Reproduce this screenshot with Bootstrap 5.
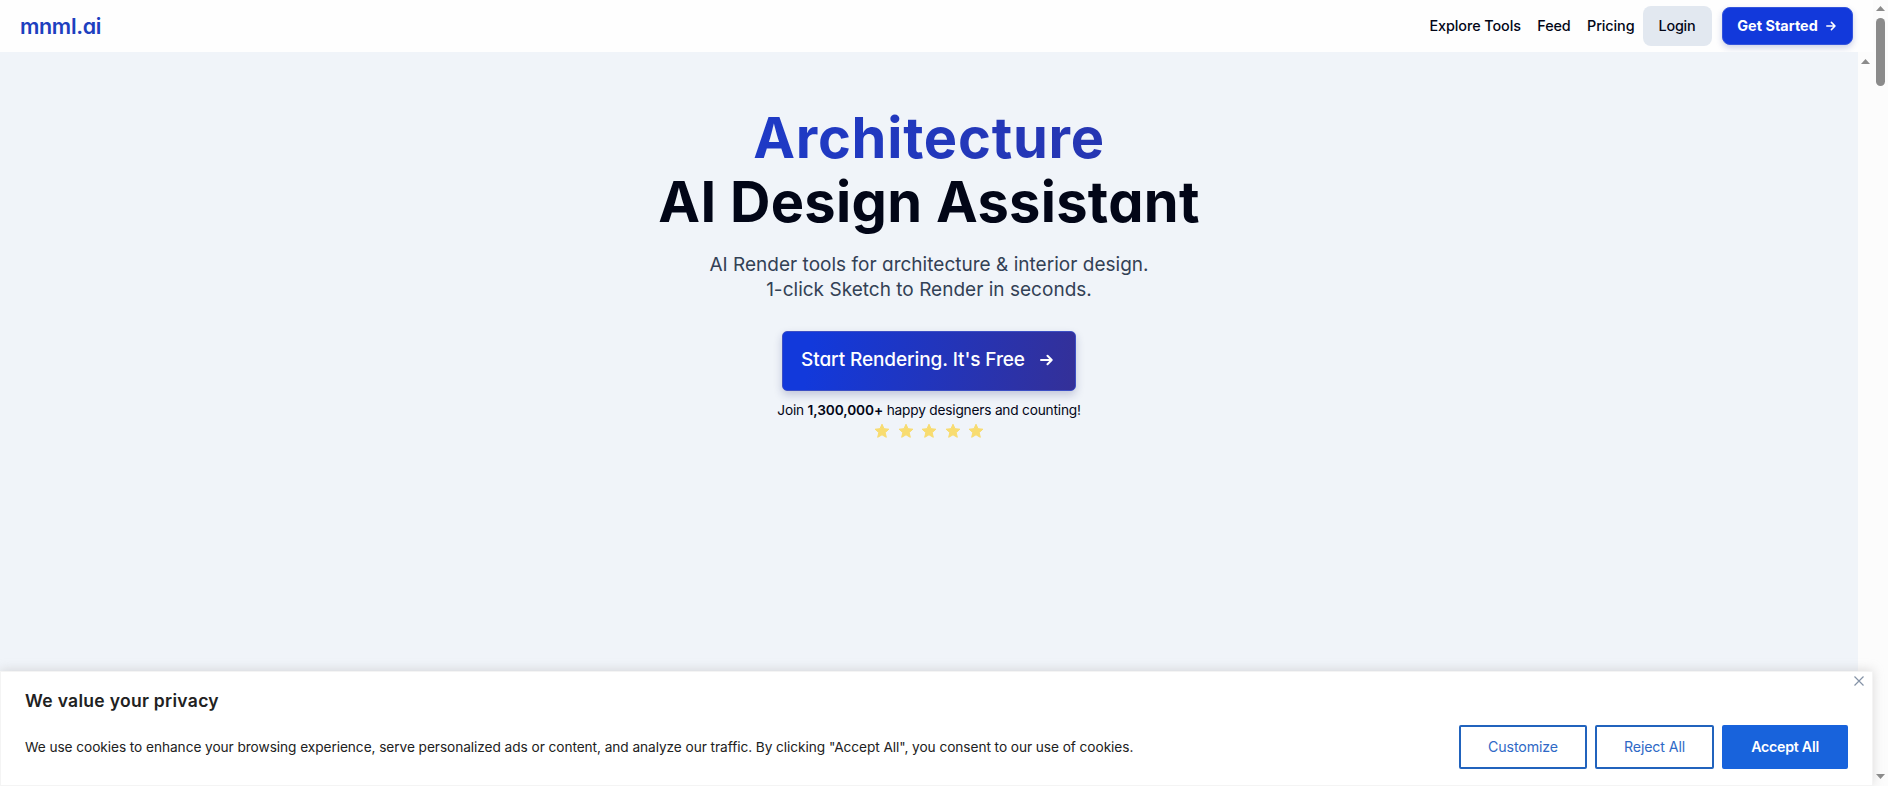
<!DOCTYPE html>
<html lang="en">
<head>
<meta charset="utf-8">
<meta name="viewport" content="width=device-width, initial-scale=1">
<title>mnml.ai</title>
<link href="https://cdn.jsdelivr.net/npm/bootstrap@5.3.0/dist/css/bootstrap.min.css" rel="stylesheet">
<style>
body{font-family:Inter,"Liberation Sans",sans-serif;background:#fcfcfc;color:#020617}
.display-face{font-feature-settings:"cv11"}
.site-nav{height:52px;padding:0 20px 0 20px;background:#fefefe;flex:none}
.brand-name{font-size:21.5px;font-weight:600;line-height:30px;letter-spacing:-.33px;color:#1d40bf;margin-top:-1px}
.nav-text{font-size:14.4px;font-weight:500;line-height:20px;letter-spacing:-.09px;color:#020617;white-space:nowrap;text-decoration:none}
.nav-text.tools{margin-right:16.5px}
.nav-text.feed{margin-right:16.5px;letter-spacing:-.15px}
.nav-text.pricing{margin-right:8.5px}
.btn-login{width:69px;height:40px;background:#e2e8f0;border-radius:8px;padding:0 1px 0 0;border:0;margin-right:10px;letter-spacing:-.25px}
.btn-start{width:131px;height:38px;background:#1239db;border-radius:8px;padding:0 2px 0 0;border:1px solid #3354dc;box-shadow:0 3px 6px rgba(30,50,150,.22);color:#fff;font-weight:700;letter-spacing:.05px}
.hero{background:#f0f4f9}
.hero-title{font-size:56px;line-height:64px;font-weight:700;margin:0;padding-top:54px;letter-spacing:.3px;color:#020617}
.hero-title .accent{letter-spacing:.75px;background:linear-gradient(90deg,#1e3ac6,#2636b2);-webkit-background-clip:text;background-clip:text;-webkit-text-fill-color:transparent}
.hero-sub{font-size:19px;line-height:25px;color:#334155;margin:18px 0 0;letter-spacing:.02px}
.btn-cta{width:294px;height:60px;margin-top:29px;padding:0 4px 2px 0;border:1px solid #3d4fc4;border-radius:5px;background:linear-gradient(100deg,#1239db 10%,#343098);color:#fff;font-size:19px;letter-spacing:-.1px;font-weight:500;box-shadow:0 4px 8px rgba(30,40,110,.22)}
.btn-cta svg{margin-left:15px}
.join{font-size:13.7px;line-height:20px;letter-spacing:-.2px;margin:9px 0 0}
.join b{font-weight:600;letter-spacing:-.1px}
.stars{margin-top:3px;gap:7.5px}
.consent{height:115px;background:#fff;border:1px solid #f4f4f4;box-shadow:0 -1px 10px 0 rgba(172,171,171,.4);padding:17px 24px 0;position:relative;flex:none}
.consent-title{font-size:17.5px;font-weight:600;line-height:24px;letter-spacing:.3px;color:#212121;margin:0 0 12px}
.consent-text{font-size:13.7px;line-height:24px;letter-spacing:-.069px;color:#212121;margin:0;white-space:nowrap}
.btn-consent{height:44px;border:2px solid #2163bd;border-radius:2px;padding:0;font-size:14.2px;letter-spacing:-.12px;color:#2f69c6;background:#fff}
.btn-customize{width:128px}
.btn-reject{width:119px}
.btn-accept{width:126px;background:#1863dc;border-color:#1863dc;color:#fff;font-weight:600;letter-spacing:-.25px}
.consent-close{position:absolute;top:4px;right:8px;line-height:0}
.rail{width:15px;background:#fcfcfc;flex:none}
.rail-inner{padding-top:7px}
.rail-outer{padding:6px 0 7px}
.thumb{width:9px;height:68px;border-radius:5px;background:#8b8b8b;margin-top:7px}
svg{display:block;flex:none}
</style>
</head>
<body class="vh-100 overflow-hidden d-flex">
<div class="flex-grow-1 d-flex flex-column">
  <nav class="site-nav d-flex align-items-center">
    <a href="#" class="brand-name display-face text-decoration-none me-auto">mnml.ai</a>
    <a href="#" class="nav-text tools">Explore Tools</a>
    <a href="#" class="nav-text feed">Feed</a>
    <a href="#" class="nav-text pricing">Pricing</a>
    <button class="btn btn-login nav-text">Login</button>
    <button class="btn btn-start nav-text d-flex align-items-center justify-content-center text-white">Get Started
      <svg class="ms-2" width="10" height="10" viewBox="0 0 10 10" fill="none" stroke="#fff" stroke-width="1.5" stroke-linecap="round" stroke-linejoin="round"><path d="M.8 5h8.2M5.4 1.4 9 5 5.4 8.6"/></svg>
    </button>
  </nav>
  <div class="d-flex flex-grow-1">
    <main class="hero flex-grow-1 d-flex flex-column align-items-center text-center">
      <h1 class="hero-title display-face"><span class="accent">Architecture</span><br>AI Design Assistant</h1>
      <p class="hero-sub display-face">AI Render tools for architecture &amp; interior design.<br>1-click Sketch to Render in seconds.</p>
      <button class="btn btn-cta display-face d-flex align-items-center justify-content-center">Start Rendering. It's Free
        <svg width="13" height="12" viewBox="0 0 13 12" fill="none" stroke="#fff" stroke-width="2" stroke-linecap="round" stroke-linejoin="round"><path d="M1 6h10.5M7.5 1.8 11.7 6 7.5 10.2"/></svg>
      </button>
      <p class="join">Join <b>1,300,000+</b> happy designers and counting!</p>
      <div class="stars d-flex">
        <svg width="16" height="16" viewBox="0 0 16 16" fill="#f8dc70"><path id="star" stroke="#f8dc70" stroke-linejoin="round" d="m8 1.2 2 4.5 4.9.5-3.7 3.3 1.1 4.8L8 11.8l-4.3 2.5 1.1-4.8L1.100 6.200 6 5.700z"/></svg>
        <svg width="16" height="16" viewBox="0 0 16 16" fill="#f8dc70"><use href="#star"/></svg>
        <svg width="16" height="16" viewBox="0 0 16 16" fill="#f8dc70"><use href="#star"/></svg>
        <svg width="16" height="16" viewBox="0 0 16 16" fill="#f8dc70"><use href="#star"/></svg>
        <svg width="16" height="16" viewBox="0 0 16 16" fill="#f8dc70"><use href="#star"/></svg>
      </div>
    </main>
    <div class="rail rail-inner d-flex flex-column align-items-center">
      <svg width="9" height="5" viewBox="0 0 9 5" fill="#8b8b8b"><path d="M0 5 4.500 0 9 5z"/></svg>
    </div>
  </div>
  <section class="consent">
    <h2 class="consent-title">We value your privacy</h2>
    <div class="d-flex align-items-center">
      <p class="consent-text me-auto">We use cookies to enhance your browsing experience, serve personalized ads or content, and analyze our traffic. By clicking "Accept All", you consent to our use of cookies.</p>
      <div class="d-flex gap-2">
        <button class="btn btn-consent btn-customize">Customize</button>
        <button class="btn btn-consent btn-reject">Reject All</button>
        <button class="btn btn-consent btn-accept">Accept All</button>
      </div>
    </div>
    <a href="#" class="consent-close" aria-label="Close"><svg width="10" height="10" viewBox="0 0 10 10" stroke="#8492a6" stroke-width="1.2"><path d="m.5.5 9 9m0-9-9 9"/></svg></a>
  </section>
</div>
<div class="rail rail-outer d-flex flex-column align-items-center">
  <svg width="9" height="5" viewBox="0 0 9 5" fill="#8b8b8b"><path d="M0 5 4.500 0 9 5z"/></svg>
  <div class="thumb"></div>
  <svg class="mt-auto" width="9" height="5" viewBox="0 0 9 5" fill="#8b8b8b"><path d="M0 0 4.500 5 9 0z"/></svg>
</div>
<script src="https://cdn.jsdelivr.net/npm/bootstrap@5.3.0/dist/js/bootstrap.bundle.min.js"></script>
</body>
</html>
